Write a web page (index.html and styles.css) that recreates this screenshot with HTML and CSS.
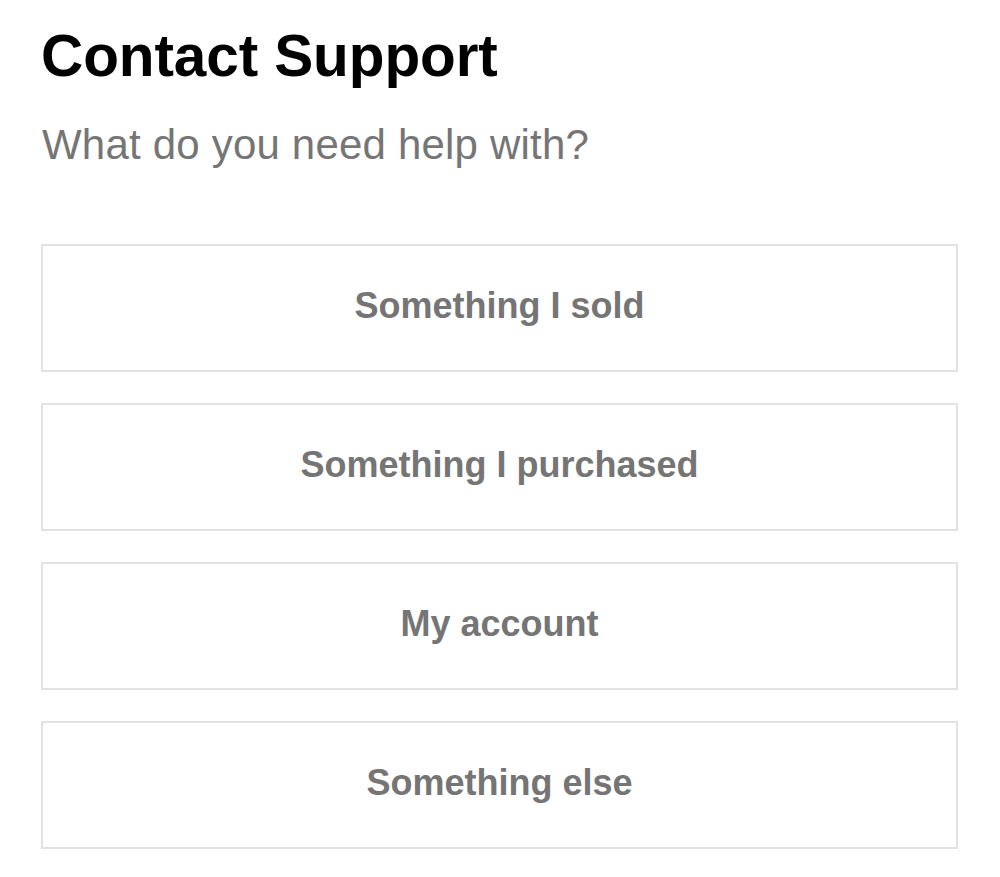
FILE: index.html
```html
<!DOCTYPE html>
<html lang="en">
<head>
<meta charset="utf-8">
<title>Contact Support</title>
<link rel="stylesheet" href="styles.css">
</head>
<body>
<main class="page">
  <h1 class="title">Contact Support</h1>
  <p class="subtitle">What do you need help with?</p>
  <div class="options">
    <button class="option">Something I sold</button>
    <button class="option">Something I purchased</button>
    <button class="option">My account</button>
    <button class="option">Something else</button>
  </div>
</main>
</body>
</html>
```

FILE: styles.css
```css
html, body {
  margin: 0;
  padding: 0;
  background: #ffffff;
}

body {
  font-family: "Liberation Sans", Arial, Helvetica, sans-serif;
}

.page {
  padding: 27px 42px 0 41px;
}

.title {
  margin: 0;
  font-size: 58.5px;
  line-height: 58px;
  font-weight: 700;
  color: #000000;
  letter-spacing: -0.1px;
}

.subtitle {
  margin: 39px 0 0 1px;
  font-size: 42px;
  line-height: 42px;
  font-weight: 400;
  color: #757575;
  letter-spacing: 0.2px;
}

.options {
  margin-top: 78px;
  display: flex;
  flex-direction: column;
  gap: 31px;
}

.option {
  display: flex;
  align-items: center;
  justify-content: center;
  box-sizing: border-box;
  width: 100%;
  height: 128px;
  padding: 0 0 4px 0;
  margin: 0;
  background: #ffffff;
  border: 2px solid #e2e2e2;
  border-radius: 0;
  font-family: "Liberation Sans", Arial, Helvetica, sans-serif;
  font-size: 36px;
  line-height: 36px;
  font-weight: 700;
  color: #757575;
  cursor: pointer;
}
```
